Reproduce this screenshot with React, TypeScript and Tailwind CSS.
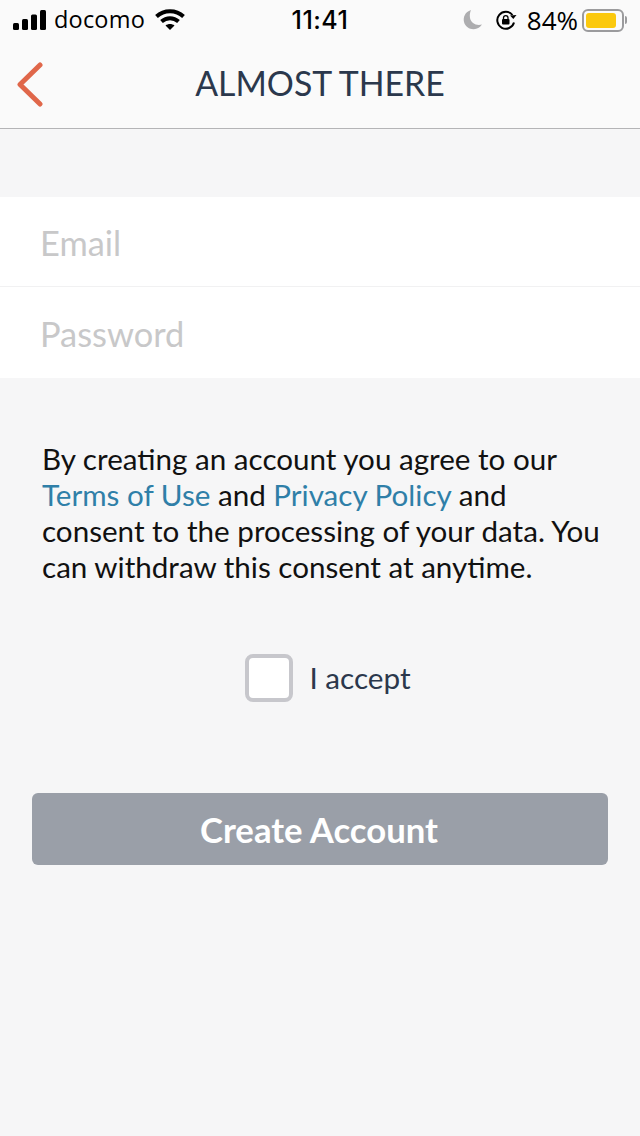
export default function App() {
  return (
    <div className="w-[640px] h-[1136px] bg-[#f6f6f7] overflow-hidden font-['Lato',sans-serif]">
      {/* status bar + nav */}
      <div className="h-[129px] bg-[#fafafa] border-b border-[#b4b4b6]">
        <div className="h-10 flex items-center justify-between pl-[13px] pr-[13px] font-['Inter',sans-serif] text-black">
          <div className="flex items-center w-[200px]">
            <svg width="35" height="20" viewBox="0 0 35 20" fill="#000">
              <rect x="0" y="13" width="6" height="7" rx="1.5" />
              <rect x="9" y="9" width="6" height="11" rx="1.5" />
              <rect x="18" y="4.5" width="6" height="15.5" rx="1.5" />
              <rect x="27" y="0" width="6" height="20" rx="1.5" />
            </svg>
            <span className="ml-[6px] text-[23.5px] tracking-[0.2px] font-['Open_Sans',sans-serif]">docomo</span>
            <svg className="ml-[10px]" width="30" height="22" viewBox="0 0 30 22" fill="none" stroke="#000" strokeWidth="4">
              <path d="M1.5 7.5C9 0.5 21 0.5 28.5 7.5" />
              <path d="M6.5 12.5C11.5 8 18.5 8 23.5 12.5" />
              <path d="M15 21L10.5 16.5C13 14.5 17 14.5 19.5 16.5Z" fill="#000" stroke="none" />
            </svg>
          </div>
          <span className="text-[25px] font-medium tracking-[0.5px] pt-[1px]">11:41</span>
          <div className="flex items-center justify-end w-[200px]">
            <svg width="20" height="22" viewBox="0 0 20 22" fill="#adadaf">
              <path d="M8 1C2 3 0 8 1 13C2.500 19 9 21.500 14 19.500C16.500 18.500 18 17 19 15.500C13 17 8 14 7 9C6.500 6 7 3 8 1Z" />
            </svg>
            <svg className="ml-[12px]" width="22" height="22" viewBox="0 0 22 22" fill="none" stroke="#000" strokeWidth="2">
              <path d="M19 13.500A8.500 8.500 0 1 1 17.500 6" />
              <path d="M21.500 6L18.300 10L15 6.500Z" fill="#000" stroke="none" />
              <rect x="7" y="10" width="7.500" height="5.500" rx="1" fill="#000" stroke="none" />
              <path d="M8.500 10V8.800A2.200 2.200 0 0 1 13 8.800V10" strokeWidth="1.300" />
            </svg>
            <span className="ml-[10px] text-[26px] font-['Open_Sans',sans-serif]">84%</span>
            <div className="ml-[4px] flex items-center">
              <div className="w-[42px] h-[23px] rounded-[6px] border-2 border-[#9b9b9d] p-[2px]">
                <div className="w-[30px] h-full rounded-[3px] bg-[#fbc90e]" />
              </div>
              <div className="ml-[1px] w-[2px] h-[8px] rounded-r-sm bg-[#9b9b9d]" />
            </div>
          </div>
        </div>
        <div className="relative h-[88px] flex items-center justify-center">
          <svg className="absolute left-[16px] top-[21px]" width="28" height="46" viewBox="0 0 28 46" fill="none" stroke="#e0674a" strokeWidth="5" strokeLinecap="round" strokeLinejoin="round">
            <path d="M24 4L4 23.500L24 43" />
          </svg>
          <h1 className="text-[33.8px] text-[#2b384c] leading-none">ALMOST THERE</h1>
        </div>
      </div>

      {/* inputs */}
      <div className="mt-[68px] bg-white">
        <div className="h-[90px] pl-[40px] pt-[2px] flex items-center border-b border-[#f1f1f2] text-[34.4px] text-[#c8c8c9]">Email</div>
        <div className="h-[91px] pl-[40px] pt-[2px] flex items-center text-[34.4px] text-[#c8c8c9]">Password</div>
      </div>

      <p className="mt-[63px] pl-[42px] text-[29.6px] leading-[36px] text-[#111] whitespace-nowrap">
        By creating an account you agree to our<br />
        <span className="text-[#2f7fa8]">Terms of Use</span> and <span className="text-[#2f7fa8]">Privacy Policy</span> and<br />
        consent to the processing of your data. You<br />
        can withdraw this consent at anytime.
      </p>

      <div className="mt-[69px] pl-[16px] flex items-center justify-center">
        <div className="w-12 h-12 rounded-[8px] border-4 border-[#c7c7cc] bg-white" />
        <span className="ml-4 text-[29.7px] text-[#2b384c]">I accept</span>
      </div>

      <div className="mt-[91px] mx-8 h-[72px] rounded-[6px] bg-[#9a9fa8] pt-[3px] flex items-center justify-center pr-[2px] text-[34.7px] font-bold text-white">
        Create Account
      </div>
    </div>
  );
}
